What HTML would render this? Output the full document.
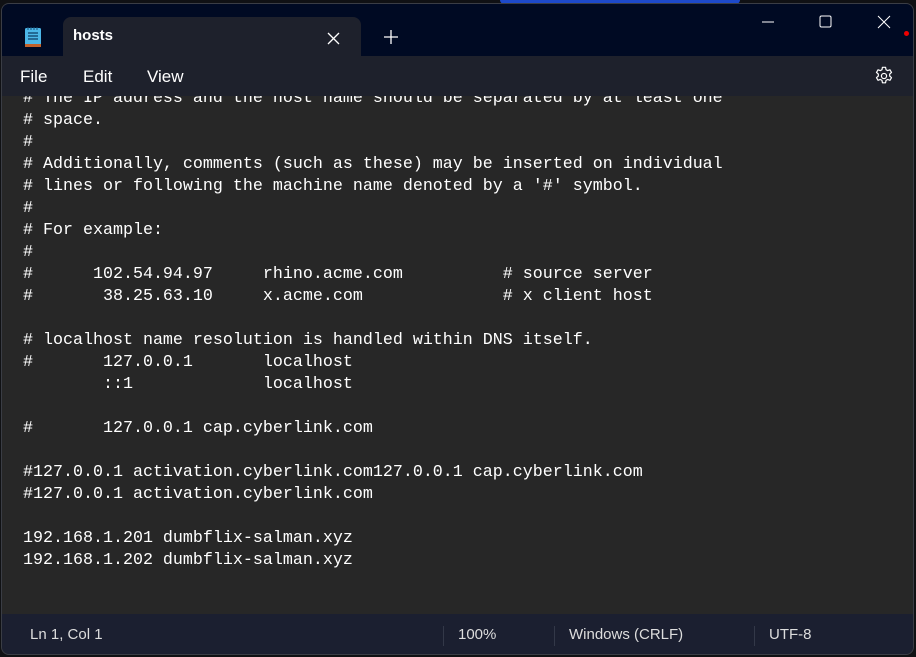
<!DOCTYPE html>
<html><head><meta charset="utf-8"><style>
*{margin:0;padding:0;box-sizing:border-box}
body{width:916px;height:657px;background:#101114;overflow:hidden;position:relative;font-family:"Liberation Sans",sans-serif}
.blob{position:absolute;left:500px;top:-20px;width:240px;height:40px;background:#1d49c9;border-radius:50%}
.win{position:absolute;left:1px;top:3px;width:913px;height:652px;border-radius:8px;overflow:hidden;background:#272727;border:1px solid #3a3d45}
.title{position:absolute;left:0;top:0;right:0;height:52px;background:#000a23}
.tab{position:absolute;left:61px;top:13px;width:298px;height:42px;background:#1e212c;border-radius:8px 8px 0 0}
.tab span{position:absolute;left:10px;top:10px;color:#fff;font-size:15px;font-weight:bold}
.menu{position:absolute;left:0;top:52px;right:0;height:40px;background:#1e212c}
.menu span{position:absolute;top:11px;color:#fff;font-size:17px}
.code{position:absolute;left:0;top:92px;right:0;height:518px;overflow:hidden;background:#272727}
pre{position:absolute;left:21px;top:-8px;font-family:"Liberation Mono",monospace;font-size:16.67px;line-height:22px;color:#fff}
.status{position:absolute;left:0;top:610px;right:0;height:42px;background:#1b1f30;color:#ddd;font-size:15px}
.status span{position:absolute;top:12px}
.sep{position:absolute;top:12px;width:1px;height:20px;background:#333848}
</style></head><body>
<div class="blob"></div>
<div class="win">
<div class="title">
<svg style="position:absolute;left:22px;top:22px" width="18" height="22" viewBox="0 0 18 22"><rect x="1" y="2" width="16" height="18" rx="1.5" fill="#4cb7e8"/><rect x="1" y="18" width="16" height="3" fill="#c3612a"/><path d="M4 7h10M4 10h10M4 13h10" stroke="#16507a" stroke-width="1.4"/><path d="M4 1v3M7 1v3M10 1v3M13 1v3" stroke="#16507a" stroke-width="1"/></svg>
<div class="tab"><span>hosts</span>
<svg style="position:absolute;left:264px;top:15px" width="13" height="13"><path d="M1 1L12 12M12 1L1 12" stroke="#fff" stroke-width="1.3"/></svg></div>
<svg style="position:absolute;left:382px;top:26px" width="14" height="14"><path d="M7 0V14M0 7H14" stroke="#fff" stroke-width="1.3"/></svg>
<svg style="position:absolute;left:760px;top:17px" width="12" height="2"><path d="M0 1H12" stroke="#fff" stroke-width="1"/></svg>
<svg style="position:absolute;left:817px;top:11px" width="13" height="13"><rect x="1" y="1" width="11" height="11" rx="1.5" fill="none" stroke="#fff" stroke-width="1"/></svg>
<svg style="position:absolute;left:875px;top:11px" width="14" height="14"><path d="M1 1L13 13M13 1L1 13" stroke="#fff" stroke-width="1"/></svg>
<div style="position:absolute;left:902px;top:27px;width:5px;height:5px;border-radius:50%;background:#e00"></div>
</div>
<div class="menu"><span style="left:18px">File</span><span style="left:81px">Edit</span><span style="left:145px">View</span>
<svg style="position:absolute;left:871px;top:9px" width="22" height="22" viewBox="0 0 24 24"><path d="M10.3 2.5h3.4l.5 2.6 1.8 1 2.5-.9 1.7 2.9-2 1.8v2.1l2 1.8-1.7 2.9-2.5-.9-1.8 1-.5 2.6h-3.4l-.5-2.6-1.8-1-2.5.9-1.7-2.9 2-1.8v-2.1l-2-1.8 1.7-2.9 2.5.9 1.8-1z" fill="none" stroke="#fff" stroke-width="1.3" stroke-linejoin="round"/><circle cx="12" cy="12" r="2.8" fill="none" stroke="#fff" stroke-width="1.3"/></svg>
</div>
<div class="code"><pre># The IP address and the host name should be separated by at least one
# space.
#
# Additionally, comments (such as these) may be inserted on individual
# lines or following the machine name denoted by a '#' symbol.
#
# For example:
#
#      102.54.94.97     rhino.acme.com          # source server
#       38.25.63.10     x.acme.com              # x client host

# localhost name resolution is handled within DNS itself.
#       127.0.0.1       localhost
        ::1             localhost

#       127.0.0.1 cap.cyberlink.com

#127.0.0.1 activation.cyberlink.com127.0.0.1 cap.cyberlink.com
#127.0.0.1 activation.cyberlink.com

192.168.1.201 dumbflix-salman.xyz
192.168.1.202 dumbflix-salman.xyz</pre></div>
<div class="status"><span style="left:28px">Ln 1, Col 1</span><div class="sep" style="left:441px"></div><span style="left:456px">100%</span><div class="sep" style="left:552px"></div><span style="left:567px">Windows (CRLF)</span><div class="sep" style="left:752px"></div><span style="left:767px">UTF-8</span></div>
</div>
</body></html>
